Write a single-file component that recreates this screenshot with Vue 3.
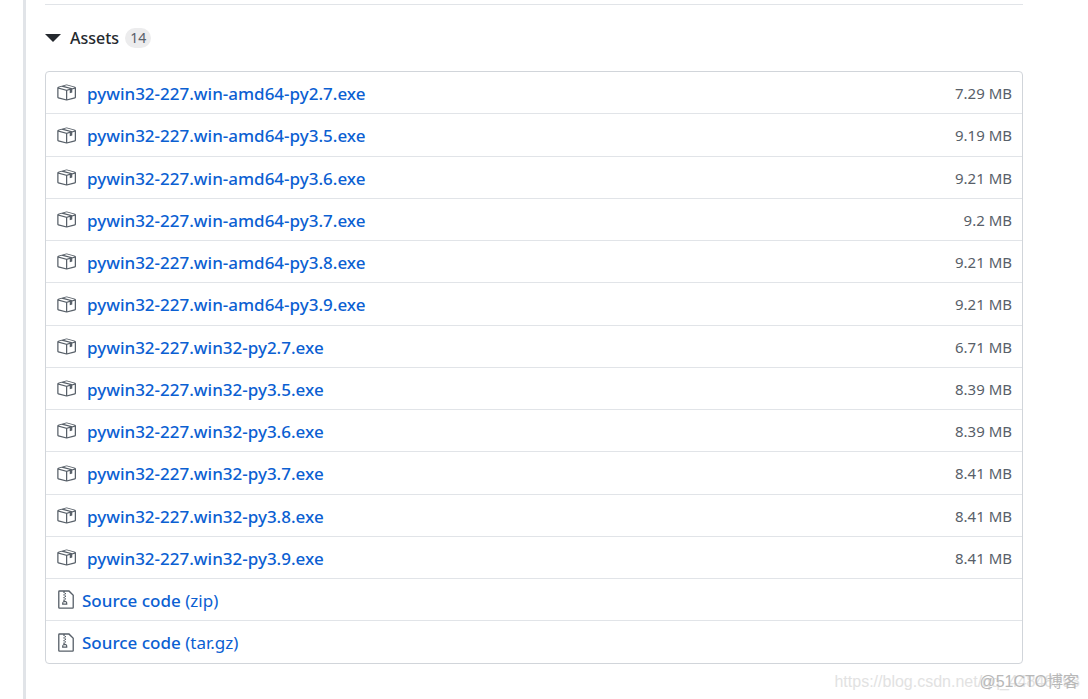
<script setup>
const files = [
  ['win-amd64-py2.7', '7.29 MB'],
  ['win-amd64-py3.5', '9.19 MB'],
  ['win-amd64-py3.6', '9.21 MB'],
  ['win-amd64-py3.7', '9.2 MB'],
  ['win-amd64-py3.8', '9.21 MB'],
  ['win-amd64-py3.9', '9.21 MB'],
  ['win32-py2.7', '6.71 MB'],
  ['win32-py3.5', '8.39 MB'],
  ['win32-py3.6', '8.39 MB'],
  ['win32-py3.7', '8.41 MB'],
  ['win32-py3.8', '8.41 MB'],
  ['win32-py3.9', '8.41 MB'],
].map(([build, size]) => ({ name: `pywin32-227.${build}.exe`, size }))
const archives = ['(zip)', '(tar.gz)']
</script>

<template>
  <main class="release">
    <details class="assets" open>
      <summary class="heading">
        <span class="caret"></span>
        <span class="title">Assets</span>
        <span class="counter">{{ files.length + archives.length }}</span>
      </summary>
      <ul class="list">
        <li v-for="file in files" :key="file.name" class="row">
          <a href="#" class="link">
            <svg class="icon package" viewBox="0 0 16 16" aria-hidden="true">
              <path fill-rule="evenodd" d="M1 4.27v7.47c0 .45.3.84.75.97l6.5 1.73c.16.05.34.05.5 0l6.5-1.73c.45-.13.75-.52.75-.97V4.27c0-.45-.3-.84-.75-.97l-6.5-1.74a1.4 1.4 0 0 0-.5 0L1.75 3.3c-.45.13-.75.52-.75.97zm7 9.09l-6-1.59V5l6 1.61v6.75zM2 4l2.5-.67L11 5.06l-2.5.67L2 4zm13 7.77l-6 1.59V6.61l2-.55V8.5l2-.53V5.53L15 5v6.77zm-2-7.24L6.5 2.8l2-.53L15 4l-2 .53z" />
            </svg>
            <span class="name">{{ file.name }}</span>
          </a>
          <small class="size">{{ file.size }}</small>
        </li>
        <li v-for="kind in archives" :key="kind" class="row">
          <a href="#" class="link archive">
            <svg class="icon zip" viewBox="0 0 12 16" aria-hidden="true">
              <path fill-rule="evenodd" d="M8.5 1H1a1 1 0 0 0-1 1v12a1 1 0 0 0 1 1h10a1 1 0 0 0 1-1V4.5L8.5 1zM11 14H1V2h3v1h1V2h3l3 3v9zM5 4V3h1v1H5zM4 4h1v1H4V4zm1 2V5h1v1H5zM4 6h1v1H4V6zm1 2V7h1v1H5zM4 9.28A2 2 0 0 0 3 11v1h4v-1a2 2 0 0 0-2-2V8H4v1.28zM6 10v1H4v-1h2z" />
            </svg>
            <span><span class="name">Source code</span> {{ kind }}</span>
          </a>
        </li>
      </ul>
    </details>
    <div class="watermark source">https://blog.csdn.net/qq_44848793</div>
    <div class="watermark host">@51CTO博客</div>
  </main>
</template>

<style>
body {
  background: #fff;
}
</style>

<style scoped>
.release {
  box-sizing: border-box;
  position: relative;
  min-height: 100vh;
  margin-left: 23px;
  padding: 4px 65px 35px 19px;
  border-left: 3px solid #e1e4e8;
  overflow: hidden;
  color: #24292e;
  font: 17px/26px "Noto Sans", "Open Sans", sans-serif;
}
.assets {
  border-top: 1px solid #e1e4e8;
}
.heading {
  display: flex;
  align-items: center;
  height: 26px;
  padding: 20px 0;
  list-style: none;
  cursor: pointer;
}
.caret {
  border: 8px solid transparent;
  border-top-color: #24292e;
  border-bottom: 0;
}
.title {
  margin: 0 6px 0 9px;
  font-size: 16px;
  font-weight: 500;
}
.counter {
  padding: 0 5px;
  border-radius: 10px;
  background: #ececed;
  color: #586069;
  font-size: 14px;
  line-height: 20px;
}
.list {
  margin: 0;
  padding: 0;
  border: 1px solid #d1d5da;
  border-radius: 4px;
  list-style: none;
}
.row {
  box-sizing: border-box;
  display: flex;
  align-items: center;
  justify-content: space-between;
  height: 42px;
  padding: 2px 10px 0;
}
.row:first-child {
  height: 41px;
}
.row:nth-child(4n + 2) {
  height: 43px;
}
.row + .row {
  border-top: 1px solid #e1e4e8;
}
.link {
  display: flex;
  align-items: center;
  gap: 11px;
  color: #0b60d2;
  text-decoration: none;
}
.archive {
  gap: 8px;
}
.name {
  font-weight: 500;
}
.icon {
  height: 21px;
  margin-bottom: 2px;
  fill: #586069;
}
.package {
  width: 20px;
}
.zip {
  width: 16px;
  margin-left: 2px;
}
.size {
  padding-bottom: 2px;
  color: #586069;
  font-size: 15px;
}
.watermark {
  position: absolute;
  white-space: nowrap;
  line-height: 20px;
}
.source {
  right: 8px;
  bottom: 7px;
  color: #e2e2e2;
  font-family: "Liberation Sans", sans-serif;
  font-size: 16px;
}
.host {
  right: 9px;
  bottom: 7px;
  color: #b8b8b8;
  font-family: "Liberation Sans", "Noto Sans CJK SC", sans-serif;
  font-size: 16px;
}
</style>
